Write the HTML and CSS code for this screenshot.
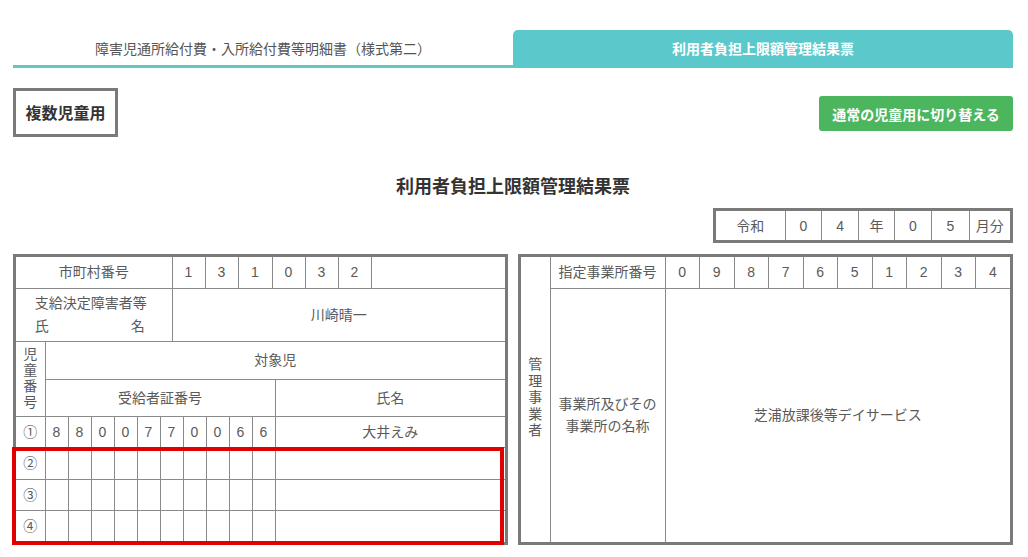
FILE: index.html
```html
<!DOCTYPE html>
<html lang="ja">
<head>
<meta charset="utf-8">
<title>利用者負担上限額管理結果票</title>
<link rel="stylesheet" href="styles.css">
</head>
<body>
<div class="page">
  <div class="tabs">
    <div class="tab">障害児通所給付費・入所給付費等明細書（様式第二）</div>
    <div class="tab active">利用者負担上限額管理結果票</div>
  </div>

  <div class="toolbar">
    <div class="mode">複数児童用</div>
    <button class="switch">通常の児童用に切り替える</button>
  </div>

  <h1 class="title">利用者負担上限額管理結果票</h1>

  <div class="date-row">
    <table class="grid date">
      <colgroup>
        <col style="width:70px"><col style="width:36px"><col style="width:37px"><col style="width:35px"><col style="width:37px"><col style="width:37px"><col style="width:42px">
      </colgroup>
      <tr>
        <td>令和</td><td>0</td><td>4</td><td>年</td><td>0</td><td>5</td><td>月分</td>
      </tr>
    </table>
  </div>

  <div class="forms">
    <div class="box left">
      <table class="grid t1">
        <colgroup>
          <col style="width:156px"><col style="width:33px"><col style="width:33px"><col style="width:34px"><col style="width:33px"><col style="width:33px"><col style="width:33px"><col>
        </colgroup>
        <tr class="r-city">
          <td>市町村番号</td><td>1</td><td>3</td><td>1</td><td>0</td><td>3</td><td>2</td><td></td>
        </tr>
        <tr class="r-guardian">
          <td>
            <div class="label-2">
              <div>支給決定障害者等</div>
              <div class="spread"><span>氏</span><span>名</span></div>
            </div>
          </td>
          <td colspan="7">川崎晴一</td>
        </tr>
      </table>
      <div class="sep">
        <table class="grid t2">
          <colgroup>
            <col style="width:29px">
            <col style="width:23px"><col style="width:23px"><col style="width:23px"><col style="width:23px"><col style="width:23px">
            <col style="width:23px"><col style="width:23px"><col style="width:23px"><col style="width:23px"><col style="width:23px">
            <col>
          </colgroup>
          <tr class="r-head1">
            <td rowspan="2" class="vcol top"><span class="vtext">児童番号</span></td>
            <td colspan="11">対象児</td>
          </tr>
          <tr class="r-head2">
            <td colspan="10">受給者証番号</td>
            <td>氏名</td>
          </tr>
          <tr class="r-child odd">
            <td>①</td><td>8</td><td>8</td><td>0</td><td>0</td><td>7</td><td>7</td><td>0</td><td>0</td><td>6</td><td>6</td><td>大井えみ</td>
          </tr>
          <tr class="r-child even">
            <td>②</td><td></td><td></td><td></td><td></td><td></td><td></td><td></td><td></td><td></td><td></td><td></td>
          </tr>
          <tr class="r-child odd">
            <td>③</td><td></td><td></td><td></td><td></td><td></td><td></td><td></td><td></td><td></td><td></td><td></td>
          </tr>
          <tr class="r-child even">
            <td>④</td><td></td><td></td><td></td><td></td><td></td><td></td><td></td><td></td><td></td><td></td><td></td>
          </tr>
        </table>
      </div>
      <div class="highlight"></div>
    </div>

    <div class="box right">
      <table class="grid t3">
        <colgroup>
          <col style="width:29px"><col style="width:115px">
          <col><col><col><col><col><col><col><col><col><col>
        </colgroup>
        <tr class="r-office">
          <td rowspan="2" class="vcol"><span class="vtext wide">管理事業者</span></td>
          <td>指定事業所番号</td>
          <td>0</td><td>9</td><td>8</td><td>7</td><td>6</td><td>5</td><td>1</td><td>2</td><td>3</td><td>4</td>
        </tr>
        <tr class="r-name">
          <td>事業所及びその<br>事業所の名称</td>
          <td colspan="10">芝浦放課後等デイサービス</td>
        </tr>
      </table>
    </div>
  </div>
</div>
</body>
</html>
```

FILE: styles.css
```css
* { box-sizing: border-box; }

html, body {
  margin: 0;
  padding: 0;
  background: #ffffff;
}

body {
  font-family: "Liberation Sans", "Noto Sans CJK JP", sans-serif;
  color: #555555;
  font-size: 14px;
}

.page {
  width: 1000px;
  margin-left: 13px;
  padding-top: 30px;
}

/* tabs */
.tabs {
  display: flex;
  height: 38px;
}

.tab {
  flex: 1 1 0;
  display: flex;
  align-items: center;
  justify-content: center;
  font-size: 14px;
  color: #555555;
  border-bottom: 3px solid #63c7c1;
}

.tab.active {
  background: #5bc9cb;
  color: #ffffff;
  font-weight: bold;
  border-bottom: none;
  border-radius: 5px 5px 0 0;
  padding-bottom: 3px;
}

/* toolbar */
.toolbar {
  margin-top: 20px;
  display: flex;
  align-items: center;
  justify-content: space-between;
}

.mode {
  width: 105px;
  height: 49px;
  border: 3px solid #7a7a7a;
  display: flex;
  align-items: center;
  justify-content: center;
  font-size: 16px;
  font-weight: bold;
  color: #333333;
  padding-bottom: 1px;
}

.switch {
  font-family: inherit;
  font-size: 14px;
  font-weight: bold;
  color: #ffffff;
  background: #4cb65f;
  border: none;
  border-radius: 3px;
  height: 35px;
  width: 194px;
  padding: 0;
  margin-top: 2px;
}

/* title */
.title {
  margin: 38px 0 0;
  font-size: 18px;
  line-height: 24px;
  font-weight: bold;
  text-align: center;
  color: #333333;
}

/* date */
.date-row {
  margin-top: 9px;
  display: flex;
  justify-content: flex-end;
}

/* generic grid tables */
.grid {
  border-collapse: collapse;
  border-style: hidden;
  table-layout: fixed;
  width: 100%;
}

.grid td {
  border: 1px solid #8a8a8a;
  padding: 0;
  text-align: center;
  vertical-align: middle;
  font-size: 14px;
  color: #5a5a5a;
  line-height: 18px;
}

.date {
  width: 300px;
  border: 3px solid #7a7a7a;
  border-style: solid;
}

.grid.date td {
  height: 32px;
  border-top: none;
  border-bottom: none;
}

.grid.date td:first-child { border-left: none; }
.grid.date td:last-child { border-right: none; }

/* form tables */
.forms {
  margin-top: 11px;
  display: flex;
  gap: 10px;
}

.box {
  width: 495px;
  border: 3px solid #7a7a7a;
}

.box.left {
  position: relative;
}

.grid .r-city td { height: 31px; }
.grid .r-guardian td { height: 53px; }

.label-2 {
  display: inline-block;
  text-align: left;
  line-height: 23px;
  padding-right: 6px;
  padding-top: 1px;
}

.spread {
  display: flex;
  justify-content: space-between;
  padding-right: 2px;
}

.sep {
  border-top: 1px solid #8a8a8a;
}

.grid .r-head1 td { height: 37px; }
.grid .r-head2 td { height: 37px; }
.grid .r-child.odd td { height: 31px; }
.grid .r-child.even td { height: 32px; }

.grid td.vcol {
  line-height: 14px;
}

.grid td.vcol.top {
  vertical-align: top;
  padding-top: 5px;
}

.vtext {
  display: inline-block;
  writing-mode: vertical-rl;
  text-orientation: upright;
  font-family: "Noto Sans CJK JP", sans-serif;
  letter-spacing: 2px;
  line-height: 16px;
}

.vtext.wide {
  letter-spacing: 2.5px;
}

.grid .r-office td { height: 31px; }
.grid .r-name td { height: 254px; line-height: 22px; }

.highlight {
  position: absolute;
  left: -4px;
  top: 190px;
  width: 492px;
  height: 98px;
  border: 4px solid #e00000;
  pointer-events: none;
}
```
